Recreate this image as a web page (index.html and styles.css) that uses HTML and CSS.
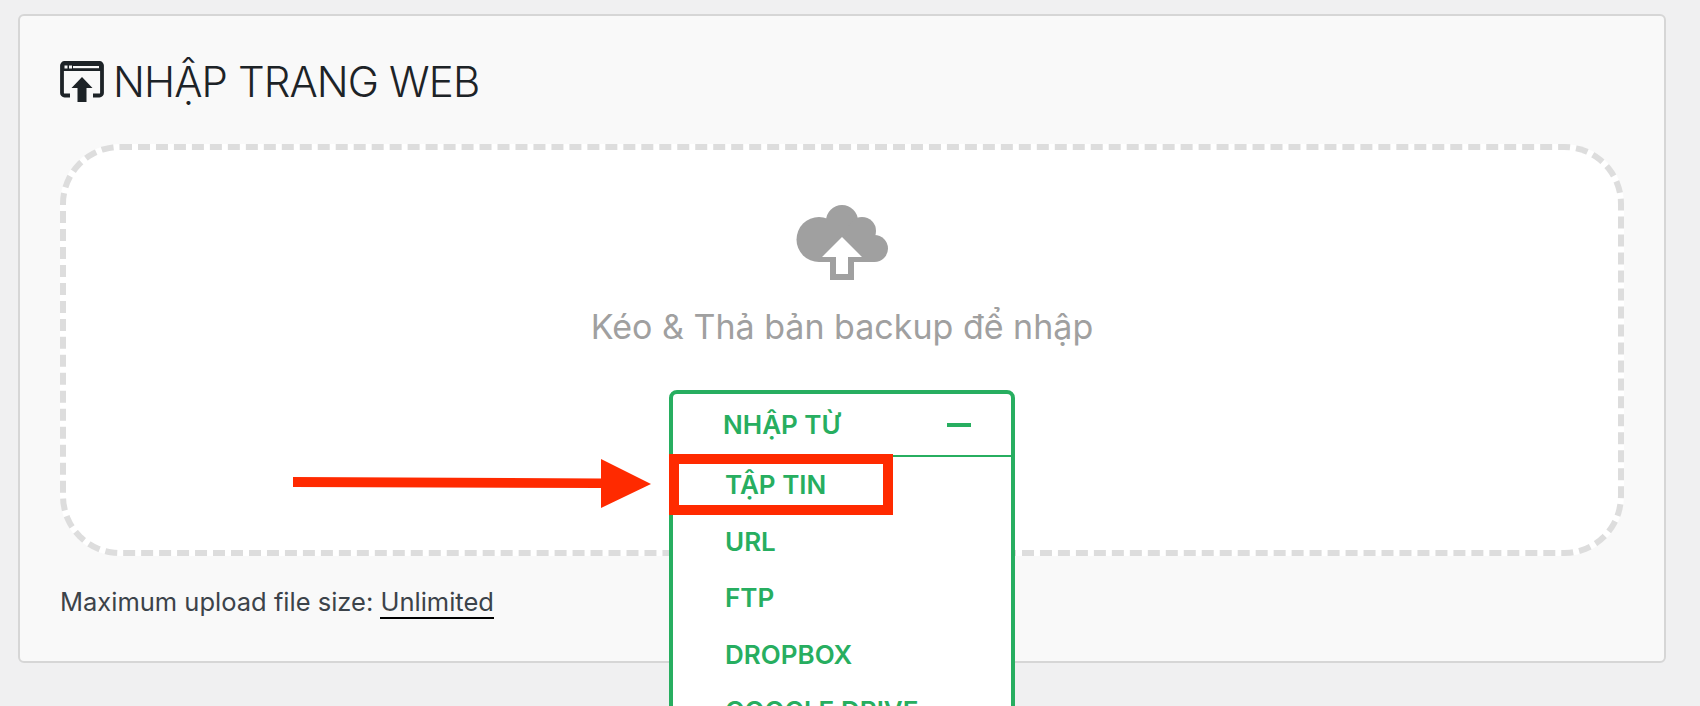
FILE: index.html
```html
<!DOCTYPE html>
<html lang="vi">

<head>
    <meta charset="UTF-8">
    <meta name="viewport" content="width=device-width, initial-scale=1.0">
    <title>Nhập trang web</title>

    <link rel="stylesheet" href="styles.css">
</head>

<body>
    <div class="import-card">
        <h1 class="import-title">
            <svg class="title-icon" viewBox="0 0 44 41">
                <path d="M10 34.500H4.500A2.500 2.500 0 0 1 2 32V4.500A2.500 2.500 0 0 1 4.500 2H39.500A2.500 2.500 0 0 1 42 4.500V32A2.500 2.500 0 0 1 39.500 34.500H33" fill="none" stroke="#1d2327" stroke-width="3.8"/>
                <rect x="2" y="2" width="40" height="8" fill="#1d2327"/>
                <rect x="13" y="5" width="26" height="2.200" fill="#f9f9f9"/>
                <rect x="4.500" y="4.500" width="3" height="3" fill="#f9f9f9"/>
                <rect x="9" y="4.500" width="3" height="3" fill="#f9f9f9"/>
                <path d="M22 16 32.500 27H26.500V41H17.500V27H11.500Z" fill="#1d2327"/>
            </svg>
            NHẬP TRANG WEB
        </h1>

        <div class="drop-zone">
            <svg class="cloud-icon" viewBox="0 0 92 76">
                <circle cx="23" cy="34.500" r="22.500" fill="#a0a0a0"/>
                <circle cx="46" cy="16" r="16" fill="#a0a0a0"/>
                <circle cx="66" cy="26" r="14" fill="#a0a0a0"/>
                <circle cx="78.500" cy="43.500" r="13.500" fill="#a0a0a0"/>
                <rect x="23" y="25" width="55" height="32" fill="#a0a0a0"/>
                <rect x="34" y="50" width="24" height="25" fill="#a0a0a0"/>
                <path d="M46 32 66 52H52V69H40V52H26Z" fill="#fff"/>
            </svg>
            <p class="drop-text">Kéo &amp; Thả bản backup để nhập</p>

            <div class="import-menu">
                <div class="menu-head">
                    <span>NHẬP TỪ</span>
                    <span class="menu-minus"></span>
                </div>
                <ul class="menu-list">
                    <li>TẬP TIN</li>
                    <li>URL</li>
                    <li>FTP</li>
                    <li>DROPBOX</li>
                    <li>GOOGLE DRIVE</li>
                </ul>
            </div>
        </div>

        <p class="upload-size">Maximum upload file size: <a class="upload-link">Unlimited</a></p>
    </div>

    <!-- red markup drawn over the screenshot -->
    <div class="mark-box"></div>
    <svg class="mark-arrow" viewBox="0 0 360 50">
        <path d="M2 18 310 19.500V0L360 25 310 49V29L2 28Z" fill="#ff2a00"/>
    </svg>
</body>

</html>
```

FILE: styles.css
```css
* {
    box-sizing: border-box;
    font-family: Inter, "Noto Sans", sans-serif;
}

html, body {
    height: 706px;
    overflow: hidden;
}

body {
    margin: 0;
    padding: 14px 34px 0 18px;
    background-color: #f0f0f1;
    position: relative;
}

.import-card {
    height: 649px;
    padding: 0 40px;
    background-color: #f9f9f9;
    border: 2px solid #d6d6d6;
    border-radius: 6px;
}

.import-title {
    display: flex;
    align-items: center;
    gap: 9px;
    height: 128px;
    margin: 0;
    padding-top: 2px;
    font-size: 42px;
    font-weight: 300;
    letter-spacing: -0.9px;
    color: #1d2327;
}

.title-icon {
    width: 44px;
    height: 41px;
    flex-shrink: 0;
}

.drop-zone {
    display: flex;
    flex-direction: column;
    align-items: center;
    height: 412px;
    padding-top: 55px;
    background-color: white;
    border: 6px dashed #dddddd;
    border-radius: 60px;
}

.cloud-icon {
    width: 92px;
    height: 76px;
    flex-shrink: 0;
}

.drop-text {
    margin: 25px 0 0;
    font-size: 34px;
    color: #a0a0a0;
}

.import-menu {
    width: 346px;
    margin-top: 43px;
    background-color: white;
    border: 4px solid #27ae60;
    border-radius: 8px;
    color: #27ae60;
    font-size: 26px;
    font-weight: 600;
    flex-shrink: 0;
}

.menu-head {
    display: flex;
    justify-content: space-between;
    align-items: center;
    height: 63px;
    padding: 0 40px 0 50px;
    border-bottom: 2px solid #27ae60;
}

.menu-minus {
    width: 24px;
    height: 4px;
    background-color: #27ae60;
}

.menu-list {
    list-style: none;
    margin: 0;
    padding: 0 0 0 52px;
}

.menu-list li {
    height: 56.5px;
    line-height: 56.5px;
}

.upload-size {
    margin: 30px 0 0;
    font-size: 25.5px;
    color: #3c434a;
}

.upload-link {
    border-bottom: 2px solid black;
}

.mark-box {
    position: absolute;
    left: 669px;
    top: 454px;
    width: 224px;
    height: 61px;
    border: 10px solid #ff2a00;
}

.mark-arrow {
    position: absolute;
    left: 291px;
    top: 459px;
    width: 360px;
    height: 50px;
}
```
